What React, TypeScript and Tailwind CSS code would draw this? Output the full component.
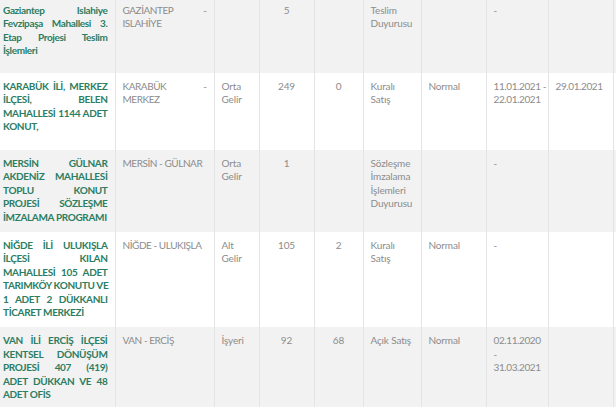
import React from 'react';

interface Row {
  title: string[];
  place: string[];
  income?: string;
  count?: string;
  remaining?: string;
  status?: string;
  type?: string;
  dates?: string[];
  drawDate?: string;
  height: string;
  grey?: boolean;
}

const rows: Row[] = [
  {
    title: ['Gaziantep Islahiye', 'Fevzipaşa Mahallesi 3.', 'Etap Projesi Teslim', 'İşlemleri'],
    place: ['GAZİANTEP -', 'ISLAHİYE'],
    count: '5',
    status: 'Teslim Duyurusu',
    dates: ['-'],
    height: 'h-[76px]',
    grey: true,
  },
  {
    title: ['KARABÜK İLİ, MERKEZ', 'İLÇESİ, BELEN', 'MAHALLESİ 1144 ADET', 'KONUT,'],
    place: ['KARABÜK -', 'MERKEZ'],
    income: 'Orta Gelir',
    count: '249',
    remaining: '0',
    status: 'Kuralı Satış',
    type: 'Normal',
    dates: ['11.01.2021 -', '22.01.2021'],
    drawDate: '29.01.2021',
    height: 'h-[77px]',
  },
  {
    title: ['MERSİN GÜLNAR', 'AKDENİZ MAHALLESİ', 'TOPLU KONUT', 'PROJESİ SÖZLEŞME', 'İMZALAMA PROGRAMI'],
    place: ['MERSİN - GÜLNAR'],
    income: 'Orta Gelir',
    count: '1',
    status: 'Sözleşme İmzalama İşlemleri Duyurusu',
    dates: ['-'],
    height: 'h-[82px]',
    grey: true,
  },
  {
    title: [
      'NİĞDE İLİ ULUKIŞLA',
      'İLÇESİ KILAN',
      'MAHALLESİ 105 ADET',
      'TARIMKÖY KONUTU VE',
      '1 ADET 2 DÜKKANLI',
      'TİCARET MERKEZİ',
    ],
    place: ['NİĞDE - ULUKIŞLA'],
    income: 'Alt Gelir',
    count: '105',
    remaining: '2',
    status: 'Kuralı Satış',
    type: 'Normal',
    dates: ['-'],
    height: 'h-[95px]',
  },
  {
    title: ['VAN İLİ ERCİŞ İLÇESİ', 'KENTSEL DÖNÜŞÜM', 'PROJESİ 407 (419)', 'ADET DÜKKAN VE 48', 'ADET OFİS'],
    place: ['VAN - ERCİŞ'],
    income: 'İşyeri',
    count: '92',
    remaining: '68',
    status: 'Açık Satış',
    type: 'Normal',
    dates: ['02.11.2020', '-', '31.03.2021'],
    height: 'h-[90px]',
    grey: true,
  },
];

const cell = 'align-top border-r border-[#e4e4e4] pt-[7px] pb-[8px] px-[7px]';

// every line but the last is stretched to the full cell width
const Justified: React.FC<{ lines: string[] }> = ({ lines }) => (
  <>
    {lines.map((line, i) => (
      <div
        key={i}
        className={
          i < lines.length - 1
            ? 'whitespace-nowrap text-justify [text-align-last:justify]'
            : 'whitespace-nowrap'
        }
      >
        {line}
      </div>
    ))}
  </>
);

const App: React.FC = () => {
  return (
    <div
      className="w-[616px] h-[407px] overflow-hidden bg-white"
      style={{ fontFamily: 'Lato, "Open Sans", sans-serif' }}
    >
      <table className="-mt-[3px] table-fixed border-collapse w-[700px] text-[10px] leading-[13.4px] text-[#8c8c8c] tracking-[-0.15px]">
        <colgroup>
          <col className="w-[115px]" />
          <col className="w-[99px]" />
          <col className="w-[45px]" />
          <col className="w-[55px]" />
          <col className="w-[49px]" />
          <col className="w-[58px]" />
          <col className="w-[65px]" />
          <col className="w-[62px]" />
          <col className="w-[65px]" />
          <col className="w-[87px]" />
        </colgroup>
        <tbody>
          {rows.map((row, i) => (
            <tr key={i} className={`${row.height} ${row.grey ? 'bg-[#f2f2f2]' : 'bg-white'}`}>
              <td className={`${cell} pl-[3px] pr-[7px] font-bold text-[#2b7d63] tracking-[-0.35px]`}>
                <Justified lines={row.title} />
              </td>
              <td className={`${cell} tracking-[-0.45px]`}>
                <Justified lines={row.place} />
              </td>
              <td className={cell}>{row.income}</td>
              <td className={`${cell} text-center`}>{row.count}</td>
              <td className={`${cell} text-center`}>{row.remaining}</td>
              <td className={cell}>{row.status}</td>
              <td className={cell}>{row.type}</td>
              <td className={`${cell} pr-[2px] tracking-[-0.4px]`}>
                {row.dates?.map((d, j) => (
                  <div key={j} className="whitespace-nowrap">
                    {d}
                  </div>
                ))}
              </td>
              <td className={`${cell} tracking-[-0.4px]`}>{row.drawDate}</td>
              <td className={cell}></td>
            </tr>
          ))}
        </tbody>
      </table>
    </div>
  );
};

export default App;
